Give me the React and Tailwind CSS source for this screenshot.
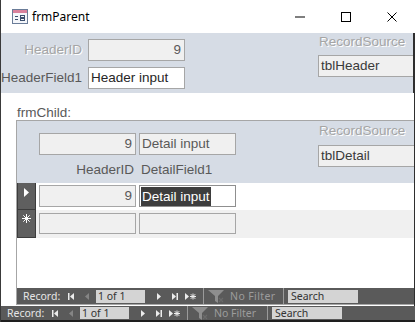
import React from 'react';

const dim = "text-[#a5a5a5] [text-shadow:1px_1px_0_#ffffff]";

function FormIcon() {
  return (
    <svg width="16" height="15" viewBox="0 0 16 15">
      <rect x="0.5" y="0.5" width="15" height="14" fill="#f4f6fa" stroke="#6a7c98" />
      <rect x="1" y="1" width="14" height="3" fill="#d9819c" />
      <rect x="3" y="7" width="3" height="1" fill="#3c4f6e" />
      <rect x="3" y="10" width="3" height="1" fill="#3c4f6e" />
      <rect x="8.5" y="6.5" width="4" height="2" fill="none" stroke="#3c4f6e" />
      <rect x="8.5" y="9.5" width="4" height="2" fill="none" stroke="#3c4f6e" />
    </svg>
  );
}

function TitleBar() {
  return (
    <div className="h-[33px] shrink-0 flex items-center bg-white">
      <div className="ml-[11px]">
        <FormIcon />
      </div>
      <span className="ml-[4px] text-[12px] text-black font-['Noto_Sans',sans-serif]">frmParent</span>
      <div className="ml-auto flex h-full">
        <div className="w-[46px] flex items-center justify-center">
          <svg width="10" height="10"><rect x="0" y="4.5" width="10" height="1" fill="#000" /></svg>
        </div>
        <div className="w-[46px] flex items-center justify-center">
          <svg width="10" height="10"><rect x="0.5" y="0.5" width="9" height="9" fill="none" stroke="#000" /></svg>
        </div>
        <div className="w-[46px] flex items-center justify-center">
          <svg width="10" height="10"><path d="M0.5 0.5 L9.5 9.5 M9.5 0.5 L0.5 9.5" stroke="#000" strokeWidth="1" /></svg>
        </div>
      </div>
    </div>
  );
}

function Header() {
  return (
    <div className="h-[60px] shrink-0 bg-[#d6dce5] flex overflow-hidden border-r-2 border-[#2e2e2e] text-[13.5px]">
      <div className="pt-[6px] flex flex-col gap-[6px]">
        <div className="flex items-center">
          <span className={"w-[81px] text-right " + dim}>HeaderID</span>
          <div className="ml-[6px] w-[97px] h-[22px] bg-[#f0f0f0] border border-[#a6a6a6] flex items-center justify-end pr-[3px] text-[#595959]">9</div>
        </div>
        <div className="flex items-center">
          <span className="w-[81px] text-right text-[#595959]">HeaderField1</span>
          <div className="ml-[6px] w-[97px] h-[22px] bg-white border border-[#a6a6a6] flex items-center pl-[2px] text-[#262626]">Header input</div>
        </div>
      </div>
      <div className="ml-[133px] pt-[1px] flex flex-col">
        <span className={"pl-[1px] leading-[16px] " + dim}>RecordSource</span>
        <div className="mt-[5px] w-[120px] h-[22px] bg-[#f0f0f0] border border-[#a6a6a6] flex items-center pl-[2px] text-[#3a3a3a]">tblHeader</div>
      </div>
    </div>
  );
}

function NavBar({ sub }) {
  const light = "#ececec";
  return (
    <div className={(sub ? "h-[16px] " : "h-[14px] ") + "shrink-0 bg-[#5a5a5a] flex items-center text-[10.5px] leading-[12px] font-['Noto_Sans',sans-serif]"}>
      <span className="w-[44px] pl-[6px] text-[#e6e6e6]">Record:</span>
      <svg className="ml-[7px]" width="6" height="7" viewBox="0 0 6 7">
        <rect x="0" y="0" width="1.5" height="7" fill={light} />
        <path d="M6 0 L2 3.5 L6 7 Z" fill={light} />
      </svg>
      <svg className="ml-[11px]" width="5" height="7" viewBox="0 0 5 7">
        <path d="M4 0 L0 3.5 L4 7 Z" fill="#858585" />
      </svg>
      <div className={(sub ? "h-[13px] " : "h-[12px] ") + "ml-[6px] w-[49px] bg-[#d4d4d4] flex items-center pl-[2px] text-[#333]"}>1 of 1</div>
      <svg className="ml-[12px]" width="5" height="7" viewBox="0 0 5 7">
        <path d="M0 0 L4 3.5 L0 7 Z" fill={light} />
      </svg>
      <svg className="ml-[10px]" width="6" height="7" viewBox="0 0 6 7">
        <path d="M0 0 L4 3.5 L0 7 Z" fill={light} />
        <rect x="4.5" y="0" width="1.5" height="7" fill={light} />
      </svg>
      <svg className="ml-[7px]" width="11" height="7" viewBox="0 0 11 7">
        <path d="M0 0 L4 3.5 L0 7 Z" fill={light} />
        <path d="M8 0.5 V6.5 M5 3.5 H11 M5.8 1.2 L10.2 5.8 M10.2 1.2 L5.8 5.8" stroke={light} strokeWidth="1" />
      </svg>
      <div className="ml-[7px] w-px h-full bg-[#9a9a9a]" />
      <svg className="ml-[3px]" width="20" height="13" viewBox="0 0 20 13">
        <path d="M1 0 H17 L11 6 V13 L8 11 V6 Z" fill="#8e8e8e" />
        <path d="M12 8 L16 12 M16 8 L12 12" stroke="#6b6b6b" strokeWidth="1.2" />
      </svg>
      <span className={(sub ? "tracking-[0.4px] " : "") + "ml-[3px] w-[53px] text-[#9c9c9c] whitespace-nowrap"}>No Filter</span>
      <div className="w-px h-full bg-[#9a9a9a]" />
      <div className={(sub ? "h-[13px] " : "h-[12px] ") + "ml-[4px] w-[70px] bg-[#d4d4d4] flex items-center pl-[3px] text-[#333]"}>Search</div>
    </div>
  );
}

function Selector({ children, h }) {
  return (
    <div className={h + " w-[19px] shrink-0 bg-[#5f5f5f] border-x border-b border-[#3c3c3c] flex justify-center pt-[4px]"}>
      {children}
    </div>
  );
}

function SubForm() {
  return (
    <div className="ml-[15px] mb-[1px] flex-1 flex flex-col overflow-hidden border-t border-l border-b border-[#a6a6a6] text-[13.5px]">
      <div className="h-[62px] shrink-0 bg-[#d6dce5] flex">
        <div className="pl-[22px] pt-[12px] flex flex-col">
          <div className="flex gap-[3px]">
            <div className="w-[97px] h-[22px] bg-[#f0f0f0] border border-[#a6a6a6] flex items-center justify-end pr-[3px] text-[#595959]">9</div>
            <div className="w-[97px] h-[22px] bg-[#f0f0f0] border border-[#a6a6a6] flex items-center pl-[2px] text-[#595959]">Detail input</div>
          </div>
          <div className="flex gap-[3px] mt-[7px] leading-[16px] text-[#595959]">
            <span className="w-[97px] text-right pr-[2px]">HeaderID</span>
            <span className="w-[97px] pl-[2px]">DetailField1</span>
          </div>
        </div>
        <div className="ml-[82px] pt-[2px] flex flex-col">
          <span className={"pl-[1px] leading-[16px] " + dim}>RecordSource</span>
          <div className="mt-[6px] w-[120px] h-[22px] bg-[#f0f0f0] border border-[#a6a6a6] flex items-center pl-[2px] text-[#3a3a3a]">tblDetail</div>
        </div>
      </div>

      <div className="flex h-[27px] shrink-0 bg-white">
        <Selector h="h-[27px]">
          <svg width="5" height="9" viewBox="0 0 5 9" className="mt-[1px]">
            <path d="M0 0 L5 4.5 L0 9 Z" fill="#ffffff" />
          </svg>
        </Selector>
        <div className="pl-[3px] pt-[2px] flex gap-[3px]">
          <div className="w-[97px] h-[22px] bg-[#f0f0f0] border border-[#a6a6a6] flex items-center justify-end pr-[3px] text-[#595959]">9</div>
          <div className="w-[97px] h-[22px] bg-white border border-[#8f8f8f] flex items-center pl-[1px]">
            <span className="bg-[#3d3d3d] text-white leading-[19px] pl-[1px] pr-[1px]">Detail input</span>
          </div>
        </div>
      </div>

      <div className="flex h-[28px] shrink-0 bg-[#f0f0f0]">
        <Selector h="h-[28px]">
          <svg width="9" height="9" viewBox="0 0 9 9">
            <path d="M4.5 0 V9 M0 4.5 H9 M1.3 1.3 L7.7 7.7 M7.7 1.3 L1.3 7.7" stroke="#ffffff" strokeWidth="1" />
          </svg>
        </Selector>
        <div className="pl-[3px] pt-[3px] flex gap-[3px]">
          <div className="w-[97px] h-[21px] bg-[#f0f0f0] border border-[#a6a6a6]" />
          <div className="w-[97px] h-[21px] bg-[#f0f0f0] border border-[#a6a6a6]" />
        </div>
      </div>

      <div className="flex-1 bg-white" />
      <NavBar sub />
    </div>
  );
}

export default function App() {
  return (
    <div className="w-[415px] h-[322px] overflow-hidden bg-white flex flex-col border-l border-[#3a3a3a] font-['Liberation_Sans',Arial,sans-serif]">
      <TitleBar />
      <Header />
      <div className="flex-1 flex flex-col bg-white border-r border-[#2e2e2e]">
        <div className="pl-[16px] pt-[13px] leading-[14px] text-[13.5px] text-[#595959]">frmChild:</div>
        <SubForm />
      </div>
      <NavBar />
      <div className="h-[2px] shrink-0 bg-[#1e1e1e]" />
    </div>
  );
}
